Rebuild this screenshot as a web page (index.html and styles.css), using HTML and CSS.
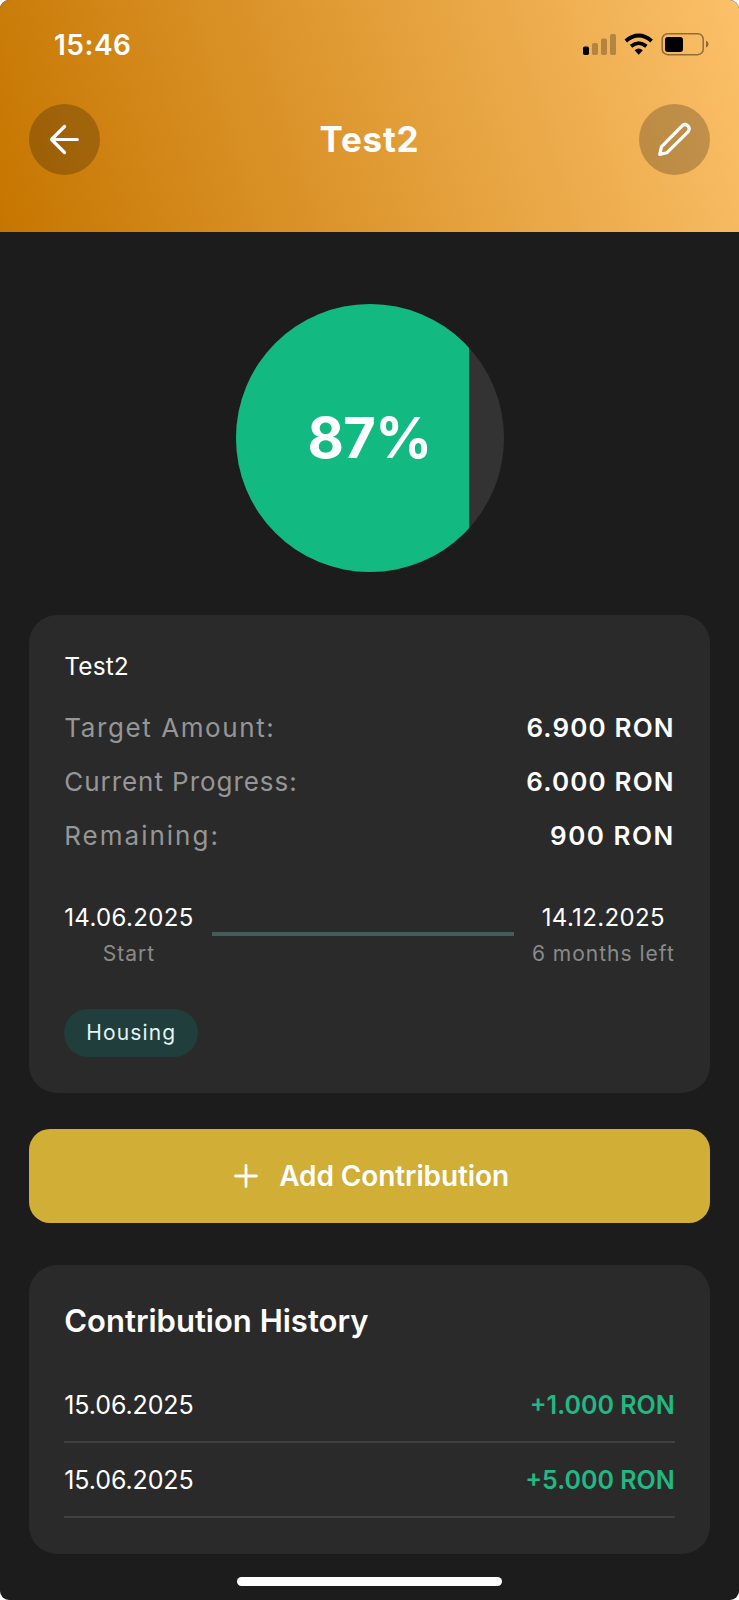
FILE: index.html
```html
<!DOCTYPE html>
<html lang="en">
<head>
<meta charset="utf-8">
<title>Test2</title>
<link rel="stylesheet" href="styles.css">
</head>
<body>
<div class="screen">
  <header class="header">
    <div class="status">
      <span class="time">15:46</span>
      <svg class="status-icons" width="130" height="26" viewBox="0 0 130 26">
        <rect x="2" y="15.500" width="6" height="8.500" rx="1.700"/>
        <g opacity=".25"><rect x="11" y="12" width="6" height="12" rx="1.700"/><rect x="20" y="7.500" width="6" height="16.500" rx="1.700"/><rect x="29" y="3" width="6" height="21" rx="1.700"/></g>
        <g fill="none" stroke="#000" stroke-width="3.800"><path d="M44.800 10Q57.700-.9 70.600 10"/><path d="M50 15.300Q57.700 9 65.400 15.300"/></g>
        <path d="M53.600 19.200Q57.700 15.700 61.800 19.200L57.700 23.700Z"/>
        <rect x="81.200" y="2.700" width="41" height="21" rx="5.500" fill="none" stroke="#000" stroke-opacity=".42" stroke-width="1.500"/>
        <rect x="84" y="6" width="18" height="15" rx="3"/>
        <path d="M125 9.700Q127.600 10.700 127.600 13T125 16.700Z" opacity=".45"/>
      </svg>
    </div>
    <div class="nav">
      <button class="round" aria-label="Back">
        <svg width="71" height="71" viewBox="0 0 71 71"><path d="M48.300 35.500H22.500M35.500 22.500L22.500 35.500L35.500 48.500"/></svg>
      </button>
      <h1 class="title">Test2</h1>
      <button class="round" aria-label="Edit">
        <svg class="pencil" width="71" height="71" viewBox="0 0 71 71"><path d="M20.800 50.400L22.400 42.800L43.600 21.400Q46.300 19.400 48.900 21.900Q51.500 24.700 49.200 27.600L27.800 48.800Z"/></svg>
      </button>
    </div>
  </header>

  <main class="content">
    <div class="ring"><div class="ring-fill" style="width:87%"></div><span class="ring-text">87%</span></div>

    <section class="card details">
      <p class="name">Test2</p>
      <div class="row"><span class="label target">Target Amount:</span><span class="value">6.900 RON</span></div>
      <div class="row"><span class="label current">Current Progress:</span><span class="value">6.000 RON</span></div>
      <div class="row"><span class="label remaining">Remaining:</span><span class="value short">900 RON</span></div>
      <div class="timeline">
        <div class="point"><span class="date">14.06.2025</span><span class="note start">Start</span></div>
        <div class="line"></div>
        <div class="point"><span class="date">14.12.2025</span><span class="note">6 months left</span></div>
      </div>
      <span class="chip">Housing</span>
    </section>

    <button class="add">
      <svg width="24" height="24" viewBox="0 0 24 24"><path d="M12 1.500V22.500M1.500 12H22.500"/></svg>
      <span>Add Contribution</span>
    </button>

    <section class="card history">
      <h2 class="heading">Contribution History</h2>
      <div class="entry"><span class="entry-date">15.06.2025</span><span class="amount">+1.000 RON</span></div>
      <div class="entry"><span class="entry-date">15.06.2025</span><span class="amount">+5.000 RON</span></div>
    </section>
  </main>
  <div class="home"></div>
</div>
</body>
</html>
```
FILE: styles.css
```css
* { box-sizing: border-box; }
html { background: #fff; }
body { margin: 0; font-family: Inter, "Liberation Sans", sans-serif; color: #fff; }
h1, h2, p { margin: 0; }
button { border: 0; padding: 0; font: inherit; color: inherit; }
svg { display: block; flex: none; }
span, h1, h2, p { white-space: nowrap; }

.screen { width: 739px; height: 1600px; background: #1c1c1c; border-radius: 9px; overflow: hidden; display: flex; flex-direction: column; align-items: center; }

.header { width: 100%; height: 232px; flex: none; background: linear-gradient(73deg, #c67600 0%, #fbc069 100%); }
.status { display: flex; justify-content: space-between; padding: 30px 28px 0 54px; height: 103.500px; }
.time { font-size: 28px; font-weight: 600; line-height: 30px; letter-spacing: .5px; }
.status-icons { margin-top: 1px; }
.nav { display: flex; justify-content: space-between; align-items: center; padding: 0 28.500px; }
.round { width: 71px; height: 71px; border-radius: 50%; background: rgba(0, 0, 0, .22); }
.round path { fill: none; stroke: #fff; stroke-width: 3.200; stroke-linecap: round; stroke-linejoin: round; }
.title { font-size: 35px; font-weight: 700; line-height: 42px; letter-spacing: .8px; }

.content { width: 681.500px; display: flex; flex-direction: column; align-items: center; padding-top: 71.500px; }
.ring { width: 268px; height: 268px; border-radius: 50%; background: #333; overflow: hidden; display: grid; align-items: center; }
.ring-fill { grid-area: 1 / 1; height: 268px; background: #12b981; }
.ring-text { grid-area: 1 / 1; text-align: center; font-size: 56px; font-weight: 700; line-height: 68px; letter-spacing: -.7px; }

.card { width: 100%; background: #2a2a2a; border-radius: 28px; padding: 0 35.500px; }
.details { height: 478.500px; margin-top: 43px; padding-top: 36.700px; }
.name { font-size: 24.500px; line-height: 30px; letter-spacing: .1px; }
.row { display: flex; justify-content: space-between; font-size: 26px; line-height: 32px; margin-bottom: 22.400px; }
.name + .row { margin-top: 30.500px; }
.label { color: #969696; font-weight: 400; }
.target { letter-spacing: 1.600px; }
.current { letter-spacing: .950px; }
.remaining { letter-spacing: 2px; }
.value { font-weight: 600; letter-spacing: 1.150px; }
.value.short { letter-spacing: 1.500px; }
.timeline { display: flex; margin-top: 51px; gap: 18px; }
.point { display: flex; flex-direction: column; align-items: center; }
.date { font-size: 24px; line-height: 30px; letter-spacing: .35px; }
.note { font-size: 21px; line-height: 26px; margin-top: 7.500px; color: #8a8a8a; font-weight: 400; letter-spacing: 1px; }
.line { flex: 1; height: 4px; margin-top: 29px; background: #455c5b; }
.chip { display: inline-flex; align-items: center; justify-content: center; width: 134px; height: 48px; margin-top: 42.300px; border-radius: 25px; background: #203e3c; color: #e4f5f4; font-size: 21px; line-height: 26px; letter-spacing: 1.150px; }

.add { width: 100%; height: 94px; margin-top: 36px; border-radius: 21px; background: #d1ae36; display: flex; align-items: center; padding-left: 205.500px; gap: 21px; font-size: 28px; font-weight: 600; letter-spacing: -.1px; }
.add path { fill: none; stroke: #fff; stroke-width: 2.800; stroke-linecap: round; }

.history { height: 288.500px; margin-top: 42px; padding-top: 37px; }
.heading { font-size: 31px; font-weight: 600; line-height: 38px; margin-bottom: 28px; }
.entry { height: 75px; display: flex; justify-content: space-between; align-items: center; border-bottom: 2px solid #404040; font-size: 25px; line-height: 30px; }
.entry-date { letter-spacing: -.1px; }
.amount { color: #20b984; font-weight: 600; }

.home { width: 265px; height: 9px; margin-top: 23px; border-radius: 5px; background: #fff; flex: none; }
```
